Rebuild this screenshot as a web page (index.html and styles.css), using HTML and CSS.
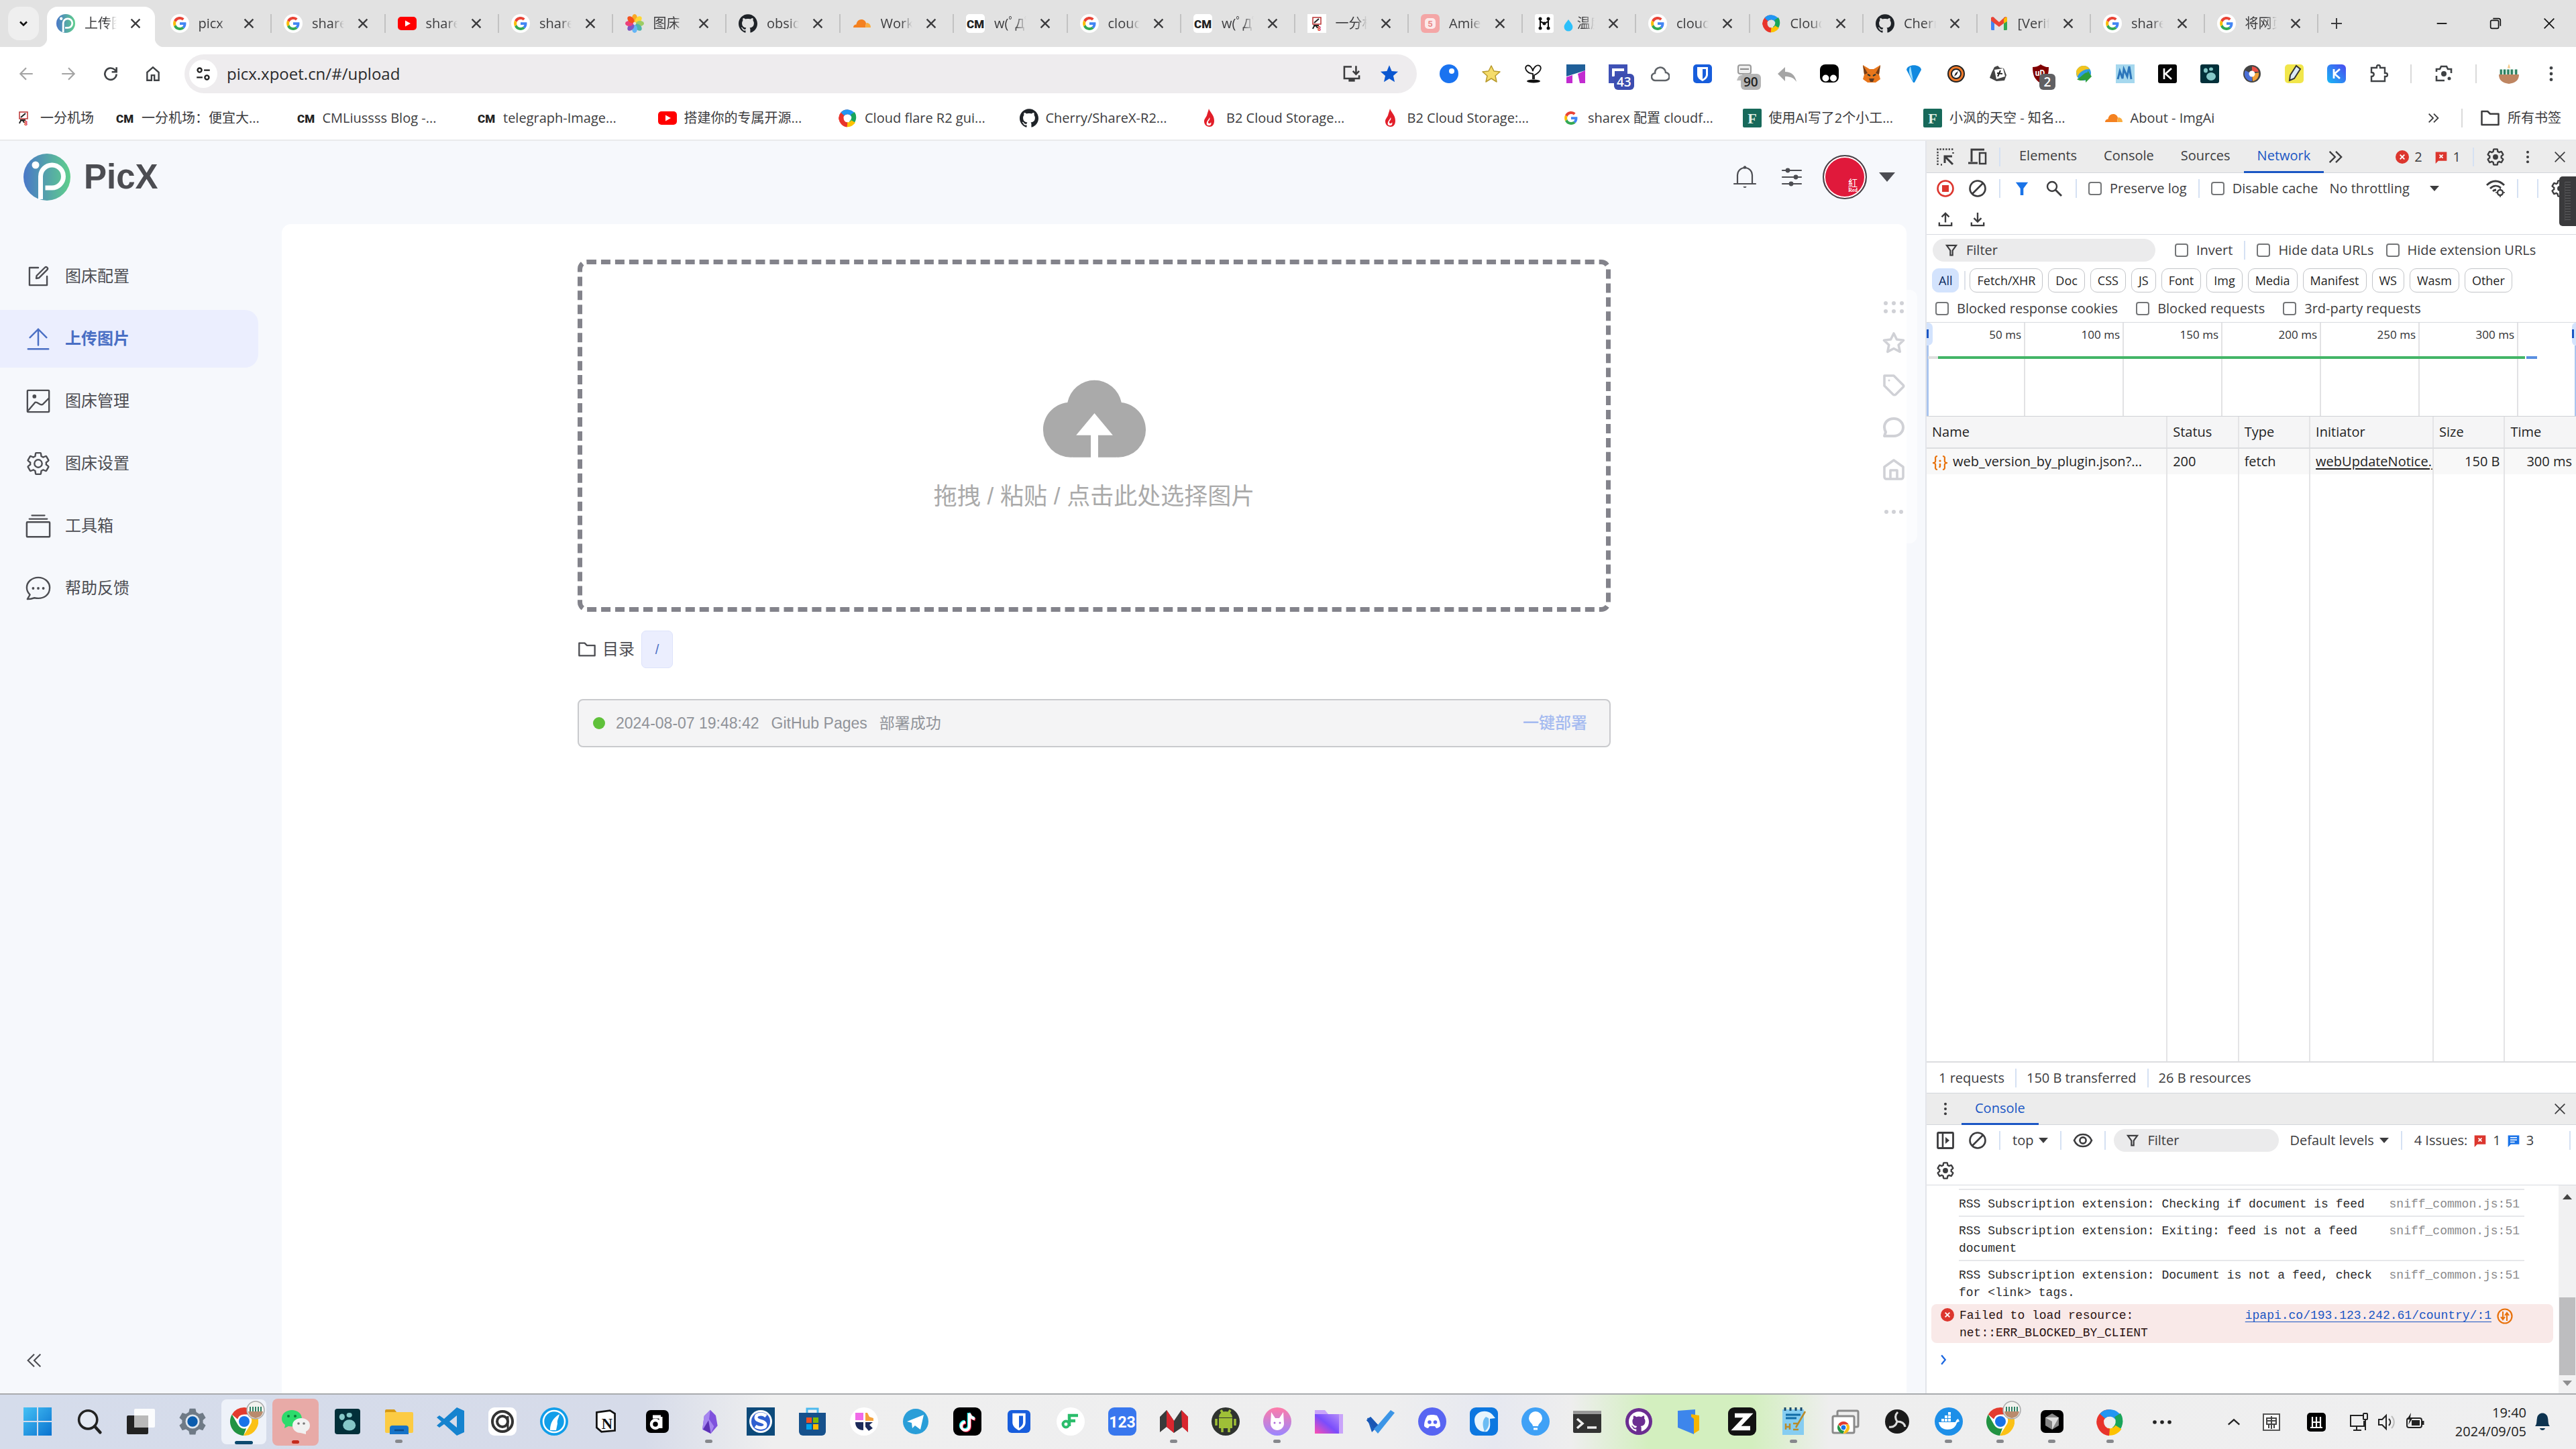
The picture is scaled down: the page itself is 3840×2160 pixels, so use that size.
FILE: index.html
```html
<!DOCTYPE html>
<html lang="zh-CN">
<head>
<meta charset="utf-8">
<title>上传图片 | PicX</title>
<link rel="stylesheet" href="styles.css">
</head>
<body>
<svg class="sprite" aria-hidden="true">
  <defs>
    <linearGradient id="gp" x1="0" y1="0" x2="1" y2="0"><stop offset="0" stop-color="#4a78c8"/><stop offset="1" stop-color="#5fcf8c"/></linearGradient>
    <linearGradient id="gwin" x1="0" y1="0" x2="1" y2="1"><stop offset="0" stop-color="#45c1f5"/><stop offset="1" stop-color="#0a72cf"/></linearGradient>
    <linearGradient id="gcat" x1="0" y1="0" x2="0" y2="1"><stop offset="0" stop-color="#ff7ba8"/><stop offset="1" stop-color="#9a86ff"/></linearGradient>
    <linearGradient id="gfold" x1="0" y1="1" x2="1" y2="0"><stop offset="0" stop-color="#ff4fb0"/><stop offset=".5" stop-color="#7a4dfc"/><stop offset="1" stop-color="#b38cf8"/></linearGradient>
    <linearGradient id="gk" x1="0" y1="1" x2="1" y2="0"><stop offset="0" stop-color="#18b8f5"/><stop offset="1" stop-color="#4b49f0"/></linearGradient>
  </defs>
  <symbol id="close" viewBox="0 0 24 24"><path d="M6.500 6.500l11 11M17.500 6.500l-11 11" stroke="currentColor" stroke-width="2" fill="none"/></symbol>
  <symbol id="down" viewBox="0 0 24 24"><path d="M6 9l6 6 6-6" stroke="currentColor" stroke-width="3" fill="none"/></symbol>
  <symbol id="plus" viewBox="0 0 24 24"><path d="M12 4v16M4 12h16" stroke="currentColor" stroke-width="2"/></symbol>
  <symbol id="min" viewBox="0 0 24 24"><path d="M4 12h16" stroke="currentColor" stroke-width="2"/></symbol>
  <symbol id="restore" viewBox="0 0 24 24"><rect x="4" y="7" width="13" height="13" rx="2" fill="none" stroke="currentColor" stroke-width="1.800"/><path d="M8 4h9a3 3 0 0 1 3 3v9" fill="none" stroke="currentColor" stroke-width="1.800"/></symbol>
  <symbol id="wclose" viewBox="0 0 24 24"><path d="M4 4l16 16M20 4L4 20" stroke="currentColor" stroke-width="1.800"/></symbol>
  <symbol id="back" viewBox="0 0 24 24"><path d="M21 12H4M12 4l-8 8 8 8" fill="none" stroke="currentColor" stroke-width="2"/></symbol>
  <symbol id="fwd" viewBox="0 0 24 24"><path d="M3 12h17M12 4l8 8-8 8" fill="none" stroke="currentColor" stroke-width="2"/></symbol>
  <symbol id="reload" viewBox="0 0 24 24"><path d="M20 12.500a8 8 0 1 1-2.500-6.200L20 9M20 3v6.500h-6.500" fill="none" stroke="currentColor" stroke-width="2.400"/></symbol>
  <symbol id="home" viewBox="0 0 24 24"><path d="M4 21V10l8-7 8 7v11h-6v-7h-4v7z" fill="none" stroke="currentColor" stroke-width="2.200"/></symbol>
  <symbol id="tune" viewBox="0 0 24 24"><g fill="none" stroke="currentColor" stroke-width="2.200"><circle cx="7" cy="7" r="2.800"/><path d="M13 7h8M3 17h8"/><circle cx="17" cy="17" r="2.800"/></g></symbol>
  <symbol id="install" viewBox="0 0 24 24"><path d="M12 3H2.500v15h19v-4M17.500 2v10M13.500 8.500l4 4 4-4" fill="none" stroke="currentColor" stroke-width="2.200"/><path d="M8 18h8v4H8z" fill="currentColor"/></symbol>
  <symbol id="starf" viewBox="0 0 24 24"><path d="M12 1l3.100 7.500 8.100.7-6.100 5.300 1.800 8L12 18.300 5.100 22.500l1.800-8L.8 9.200l8.100-.7z" fill="currentColor"/></symbol>
  <symbol id="dots" viewBox="0 0 24 24"><g fill="currentColor"><circle cx="12" cy="4" r="2.200"/><circle cx="12" cy="12" r="2.200"/><circle cx="12" cy="20" r="2.200"/></g></symbol>
  <symbol id="raquo" viewBox="0 0 24 24"><path d="M4 5l7 7-7 7M12 5l7 7-7 7" fill="none" stroke="currentColor" stroke-width="2"/></symbol>
  <symbol id="laquo" viewBox="0 0 24 24"><path d="M12 4l-8 8 8 8M20 4l-8 8 8 8" fill="none" stroke="currentColor" stroke-width="1.800"/></symbol>
  <symbol id="folder" viewBox="0 0 24 24"><path d="M2 20V4h7l3 3h10v13z" fill="none" stroke="currentColor" stroke-width="2" stroke-linejoin="round"/></symbol>

  <symbol id="picx" viewBox="0 0 70 70"><circle cx="35" cy="35" r="35" fill="url(#gp)"/><circle cx="18" cy="17" r="5.500" fill="#fff"/><path d="M25.500 68V34a17 17 0 1 1 17 17h-10" fill="none" stroke="#fff" stroke-width="7"/></symbol>
  <symbol id="g" viewBox="-10 -10 68 68"><circle cx="24" cy="24" r="34" fill="#fff"/><path fill="#EA4335" d="M24 9.500c3.540 0 6.710 1.220 9.210 3.600l6.850-6.850C35.900 2.380 30.470 0 24 0 14.620 0 6.510 5.380 2.560 13.220l7.980 6.190C12.430 13.720 17.740 9.500 24 9.500z"/><path fill="#4285F4" d="M46.980 24.550c0-1.570-.15-3.090-.38-4.550H24v9.020h12.940c-.58 2.960-2.260 5.480-4.780 7.180l7.730 6c4.510-4.180 7.090-10.360 7.090-17.650z"/><path fill="#FBBC05" d="M10.530 28.590c-.48-1.450-.76-2.990-.76-4.590s.27-3.140.76-4.590l-7.980-6.190C.92 16.460 0 20.120 0 24c0 3.880.92 7.540 2.560 10.780l7.970-6.190z"/><path fill="#34A853" d="M24 48c6.480 0 11.930-2.130 15.890-5.810l-7.730-6c-2.150 1.450-4.920 2.300-8.160 2.300-6.260 0-11.570-4.220-13.470-9.910l-7.980 6.190C6.510 42.620 14.620 48 24 48z"/></symbol>
  <symbol id="yt" viewBox="0 0 28 28"><rect y="4" width="28" height="20" rx="5" fill="#f00"/><path d="M11 9.500l8 4.500-8 4.500z" fill="#fff"/></symbol>
  <symbol id="photos" viewBox="0 0 28 28"><g stroke-width="0"><ellipse cx="14" cy="6" rx="4" ry="6" fill="#f9a825"/><ellipse cx="14" cy="6" rx="4" ry="6" fill="#fdd835" transform="rotate(45 14 14)"/><ellipse cx="14" cy="6" rx="4" ry="6" fill="#9ccc65" transform="rotate(90 14 14)"/><ellipse cx="14" cy="6" rx="4" ry="6" fill="#4db6ac" transform="rotate(135 14 14)"/><ellipse cx="14" cy="6" rx="4" ry="6" fill="#64b5f6" transform="rotate(180 14 14)"/><ellipse cx="14" cy="6" rx="4" ry="6" fill="#7e57c2" transform="rotate(225 14 14)"/><ellipse cx="14" cy="6" rx="4" ry="6" fill="#ec407a" transform="rotate(270 14 14)"/><ellipse cx="14" cy="6" rx="4" ry="6" fill="#f4511e" transform="rotate(315 14 14)"/></g></symbol>
  <symbol id="gh" viewBox="0 0 24 24"><path fill="currentColor" d="M12 .297c-6.630 0-12 5.373-12 12 0 5.303 3.438 9.800 8.205 11.385.6.113.82-.258.82-.577 0-.285-.01-1.040-.015-2.040-3.338.724-4.042-1.610-4.042-1.610C4.422 18.070 3.633 17.700 3.633 17.700c-1.087-.744.084-.729.084-.729 1.205.084 1.838 1.236 1.838 1.236 1.070 1.835 2.809 1.305 3.495.998.108-.776.417-1.305.76-1.605-2.665-.3-5.466-1.332-5.466-5.930 0-1.310.465-2.380 1.235-3.220-.135-.303-.54-1.523.105-3.176 0 0 1.005-.322 3.300 1.230.96-.267 1.980-.399 3-.405 1.020.006 2.040.138 3 .405 2.280-1.552 3.285-1.230 3.285-1.230.645 1.653.24 2.873.12 3.176.765.84 1.230 1.910 1.230 3.220 0 4.610-2.805 5.625-5.475 5.920.42.36.81 1.096.81 2.220 0 1.606-.015 2.896-.015 3.286 0 .315.21.69.825.57C20.565 22.092 24 17.592 24 12.297c0-6.627-5.373-12-12-12"/></symbol>
  <symbol id="cf" viewBox="0 0 28 28"><path d="M1 20c0-3 2-4.500 4.500-4.500C6 11 9 8 13 8c4 0 6.500 2.500 7 5.500l-1 6.500z" fill="#f48120"/><path d="M20.500 13c3.500 0 6.500 2.500 6.500 7h-8z" fill="#faad3f"/></symbol>
  <symbol id="cm" viewBox="0 0 28 28"><rect width="28" height="28" rx="5" fill="#fff"/><text x="14" y="21" text-anchor="middle" font-family="Roboto, sans-serif" font-size="17" font-weight="900" fill="#222">CM</text></symbol>
  <symbol id="yf" viewBox="0 0 28 28"><rect width="28" height="28" fill="#fff"/><rect x="8" y="5" width="12" height="10" fill="#fff" stroke="#b33" stroke-width="1.500"/><path d="M10 13l7-6M8 22c2-6 5-6 7-1M9 17h8" stroke="#222" stroke-width="2" fill="none"/><text x="15" y="25" font-size="9" font-family="Roboto, sans-serif" font-weight="700" fill="#d33">8</text></symbol>
  <symbol id="amie" viewBox="0 0 28 28"><rect width="28" height="28" rx="6" fill="#f4a6a6"/><rect x="6" y="6" width="16" height="16" rx="5" fill="#fdeaea"/><text x="14" y="19" text-anchor="middle" font-size="13" font-family="Roboto, sans-serif" font-weight="700" fill="#e98b8b">5</text></symbol>
  <symbol id="hh" viewBox="0 0 28 28"><rect width="28" height="28" rx="3" fill="#fff"/><path d="M8 7v14M20 7v14M8 11l6 3 6-3" stroke="#111" stroke-width="2" fill="none"/><g fill="#111"><circle cx="8" cy="7" r="2.500"/><circle cx="8" cy="21" r="2.500"/><circle cx="20" cy="7" r="2.500"/><circle cx="20" cy="21" r="2.500"/><circle cx="14" cy="14" r="2.500"/></g></symbol>
  <symbol id="drop" viewBox="0 0 20 28"><path d="M10 4c4 6 8 9 8 14a8 8 0 0 1-16 0c0-5 4-8 8-14z" fill="#2cc0fb"/></symbol>
  <symbol id="sx" viewBox="0 0 28 28"><g fill="none" stroke-width="7"><path d="M4 16A9 9 0 0 1 14 5" stroke="#e8342c"/><path d="M6 8a10 10 0 0 1 16 2" stroke="#2196f3"/><path d="M21 7a11 11 0 0 1-3 15" stroke="#19a55a"/><path d="M22 19a10 10 0 0 1-12 4" stroke="#fdc200"/><path d="M13 24A10 10 0 0 1 4 13" stroke="#e8342c"/></g></symbol>
  <symbol id="gmail" viewBox="0 0 28 28"><path d="M2 5h5v19H3.500A1.500 1.500 0 0 1 2 22.500z" fill="#4285f4"/><path d="M21 5h5v17.500a1.500 1.500 0 0 1-1.500 1.500H21z" fill="#34a853"/><path d="M2 5l3-1 9 8 9-8 3 1v5l-12 9L2 10z" fill="#ea4335"/><path d="M21 7l4-3 1 2v5l-5 3z" fill="#fbbc04"/></symbol>
  <symbol id="flame" viewBox="0 0 28 28"><path d="M13 0c2 6 8 9 8 18 0 6-3 9-7 9s-8-3-8-8c0-4 3-6 4-9 1-4 2-6 3-10z" fill="#e21e29"/><path d="M14 13c2 4-3 5-2 8 1 2 4 1 4-1 1 3 0 5-3 5s-4-2-3-5c1-3 3-4 4-7z" fill="#fff"/></symbol>
  <symbol id="ff" viewBox="0 0 28 28"><rect width="28" height="28" rx="2" fill="#17695a"/><text x="14" y="22" text-anchor="middle" font-size="22" font-family="Liberation Serif, serif" font-weight="700" fill="#e6f3e9">F</text></symbol>

  <symbol id="e1" viewBox="0 0 28 28"><circle cx="14" cy="14" r="14" fill="#1a73f0"/><circle cx="18" cy="10" r="4" fill="#fff"/></symbol>
  <symbol id="e2" viewBox="0 0 28 28"><path d="M14 2l4 8 9 1-7 6 2 9-8-5-8 5 2-9-7-6 9-1z" fill="#f5dc6b" stroke="#b89a2c" stroke-width="1.500" stroke-linejoin="round"/></symbol>
  <symbol id="e3" viewBox="0 0 28 28"><path d="M13 22V14C3 13 0 5 4 2c4-2 8 3 9 8 1-6 6-10 10-8 4 3 1 10-8 14v6" fill="none" stroke="#111" stroke-width="1.800"/><ellipse cx="14" cy="25" rx="10" ry="2.500" fill="#111"/></symbol>
  <symbol id="e4" viewBox="0 0 28 28"><path d="M0 0h28v9L0 18z" fill="#1f5f99"/><path d="M0 19l9-3v12H0zM17 14l11-5v19h-8z" fill="#c22bd0"/></symbol>
  <symbol id="e5" viewBox="0 0 28 28"><rect width="28" height="28" fill="#3f51b5"/><path d="M5 6h18v12H5z" fill="#fff"/><path d="M9 10h16v8H9z" fill="#3f51b5"/></symbol>
  <symbol id="cloudo" viewBox="0 0 28 28"><path d="M7 24a5.500 5.500 0 0 1-1-11 8 8 0 0 1 16-1 6 6 0 0 1-1 12z" fill="none" stroke="#5f6368" stroke-width="2.600"/></symbol>
  <symbol id="bw" viewBox="0 0 28 28"><rect width="28" height="28" rx="5" fill="#175ddc"/><path d="M6 4h16v11c0 5-4 8-8 10-4-2-8-5-8-10z" fill="#fff"/><path d="M14 7h5v8c0 3-2 5-5 7z" fill="#175ddc"/></symbol>
  <symbol id="e8" viewBox="0 0 28 28"><rect x="4" y="1" width="19" height="13" rx="3" fill="#eee" stroke="#999" stroke-width="2"/><path d="M2 24c2-6 4-8 7-8h9c4 0 6 3 7 8z" fill="#bbb"/><path d="M7 7h13" stroke="#888" stroke-width="2"/></symbol>
  <symbol id="e9" viewBox="0 0 28 28"><path d="M11 4v7c9 0 15 5 17 15-4-6-9-8-17-8v7L0 14z" fill="#a5a5a5"/></symbol>
  <symbol id="e10" viewBox="0 0 28 28"><rect width="28" height="27" rx="8" fill="#000"/><circle cx="8.500" cy="20.500" r="5" fill="#fff"/><circle cx="20" cy="20.500" r="5" fill="#fff"/></symbol>
  <symbol id="e11" viewBox="0 0 28 28"><path d="M1 1l10 6h6l10-6-2 14 2 7-7 5h-12l-7-5 2-7z" fill="#e8761b"/><path d="M1 1l7 12-5 2zM27 1l-7 12 5 2z" fill="#763d16"/><path d="M10 21h8l-2 5h-4z" fill="#5b3a26"/><path d="M8 15l4 2M20 15l-4 2" stroke="#233" stroke-width="2"/></symbol>
  <symbol id="e12" viewBox="0 0 28 28"><path d="M3 8C4-1 24-1 25 8L15 27h-2z" fill="#1089e0"/><path d="M9 3c-4 5-2 13 4 22z" fill="#9fe0ff"/></symbol>
  <symbol id="e13" viewBox="0 0 28 28"><circle cx="14" cy="14" r="12" fill="#f27b2a" stroke="#222" stroke-width="2"/><circle cx="14" cy="14" r="7" fill="#fff" stroke="#222" stroke-width="2"/><path d="M17 10l-2 5-4 3 2-5z" fill="#222"/></symbol>
  <symbol id="e14" viewBox="0 0 28 28"><path d="M8 4l5-2 3 3 6 1 4 10-3 8-12 1-10-5 3-8z" fill="#444"/><path d="M8 8l13-2 3 12-13 4z" fill="#fff"/><path d="M13 18l4-9M12 13l8 1" stroke="#222" stroke-width="2"/></symbol>
  <symbol id="ub" viewBox="0 0 28 28"><path d="M14 0c4 3 8 4 12 4 0 12-3 19-12 24C5 23 2 16 2 4c4 0 8-1 12-4z" fill="#800000"/><text x="13" y="17" text-anchor="middle" font-size="12" font-family="Roboto, sans-serif" font-weight="700" fill="#fff">uD</text></symbol>
  <symbol id="e16" viewBox="0 0 28 28"><circle cx="15" cy="13" r="11" fill="#2f9be0"/><path d="M4 10c4-10 16-10 20-3-8 0-14 3-19 12z" fill="#f2c41d"/><path d="M5 22c6-2 10-10 16-10v-3l6 9-9 9v-4c-5 1-9 2-13-1z" fill="#2f9e3a"/></symbol>
  <symbol id="e17" viewBox="0 0 28 28"><rect width="28" height="28" fill="#a6d8ee"/><path d="M3 22l3-12 4 11 2-14 5 11 3-15 3 19" fill="none" stroke="#2c76bb" stroke-width="3"/></symbol>
  <symbol id="e18" viewBox="0 0 28 28"><rect width="28" height="28" rx="3" fill="#050505"/><path d="M9 6v16M20 6l-9 8 9 8" fill="none" stroke="#fff" stroke-width="2.600"/></symbol>
  <symbol id="logseq" viewBox="0 0 28 28"><rect width="28" height="28" rx="3" fill="#02303a"/><g fill="#85c8c8"><ellipse cx="8" cy="9" rx="3" ry="3.500"/><ellipse cx="16" cy="7" rx="3" ry="2.500"/><ellipse cx="16" cy="18" rx="7" ry="6"/></g></symbol>
  <symbol id="e20" viewBox="0 0 28 28"><circle cx="14" cy="14" r="13" fill="#444"/><path d="M14 3a11 11 0 0 1 10 8H14z" fill="#eb4f45"/><path d="M24 12a11 11 0 0 1-9 13l-1-11z" fill="#f0a13a"/><path d="M14 25A11 11 0 0 1 4 9l10 5z" fill="#4a6fd8"/><circle cx="14" cy="14" r="4.500" fill="#fff"/></symbol>
  <symbol id="e21" viewBox="0 0 28 28"><rect width="28" height="28" rx="5" fill="#f1e64b"/><path d="M8 16l9-14 6 5-9 14-7 3z" fill="#dbeaf5" stroke="#333" stroke-width="2"/></symbol>
  <symbol id="e22" viewBox="0 0 28 28"><rect width="28" height="28" rx="6" fill="url(#gk)"/><path d="M10 7v14M19 7l-8 7 8 7" fill="none" stroke="#fff" stroke-width="2.800"/></symbol>
  <symbol id="puzzle" viewBox="0 0 28 28"><path d="M3 5h8V3.500a2.500 2.500 0 0 1 5 0V5h7v8h1.500a2.500 2.500 0 0 1 0 5H23v7H3v-7c5 0 5-6 0-6z" fill="none" stroke="currentColor" stroke-width="2.400"/></symbol>
  <symbol id="lens" viewBox="0 0 28 28"><path d="M3 11V7h5l2-4h8l2 4h5v6M3 17v7h12" fill="none" stroke="currentColor" stroke-width="2.600"/><circle cx="14" cy="14" r="4" fill="currentColor"/><circle cx="22" cy="21" r="2.500" fill="currentColor"/></symbol>
  <symbol id="plant" viewBox="0 0 28 28"><path d="M14 0l2 6h-4z" fill="#f3c98a"/><path d="M2 8h24v6H2z" fill="#d9efe2"/><path d="M3 8v7M8 8v7M13 8v7M18 8v7M24 8v7" stroke="#2c8062" stroke-width="3"/><path d="M0 15h28c0 8-5 12-14 13C5 27 0 23 0 15z" fill="#be8561"/></symbol>

  <symbol id="edit" viewBox="0 0 1024 1024"><path fill="currentColor" d="M832 512a32 32 0 1 1 64 0v352a32 32 0 0 1-32 32H160a32 32 0 0 1-32-32V160a32 32 0 0 1 32-32h352a32 32 0 0 1 0 64H192v640h640V512z"/><path fill="currentColor" d="m469.952 554.240 52.800-7.552L847.104 222.400a32 32 0 1 0-45.248-45.248L477.440 501.440l-7.552 52.800zm422.400-422.400a96 96 0 0 1 0 135.808l-331.840 331.840a32 32 0 0 1-18.112 9.088L436.800 623.680a32 32 0 0 1-36.224-36.224l15.104-105.600a32 32 0 0 1 9.024-18.112l331.904-331.840a96 96 0 0 1 135.744 0z"/></symbol>
  <symbol id="upl" viewBox="0 0 40 40"><path d="M4 36h32M20 30V6M7 18L20 5l13 13" fill="none" stroke="currentColor" stroke-width="2.600" stroke-linecap="round"/></symbol>
  <symbol id="pic" viewBox="0 0 40 40"><rect x="3" y="3" width="34" height="34" rx="1" fill="none" stroke="currentColor" stroke-width="2.500"/><circle cx="14" cy="12.500" r="3" fill="currentColor"/><path d="M4 35l11-13c4-2 8 6 12 3l10-10" fill="none" stroke="currentColor" stroke-width="2.500"/></symbol>
  <symbol id="gear" viewBox="0 0 24 24"><path d="M19.430 12.980c.04-.32.07-.64.07-.98 0-.34-.03-.66-.07-.98l2.110-1.650c.19-.15.24-.42.12-.64l-2-3.460c-.09-.16-.26-.25-.44-.25-.06 0-.12.01-.17.03l-2.490 1c-.52-.4-1.080-.73-1.690-.98l-.38-2.650C14.460 2.180 14.250 2 14 2h-4c-.25 0-.46.18-.49.42l-.38 2.650c-.61.25-1.170.59-1.690.98l-2.490-1c-.06-.02-.12-.03-.18-.03-.17 0-.34.09-.43.25l-2 3.460c-.13.22-.07.49.12.64l2.110 1.650c-.04.32-.07.65-.07.98 0 .33.03.66.07.98l-2.110 1.650c-.19.15-.24.42-.12.64l2 3.460c.09.16.26.25.44.25.06 0 .12-.01.17-.03l2.490-1c.52.4 1.080.73 1.690.98l.38 2.650c.03.24.24.42.49.42h4c.25 0 .46-.18.49-.42l.38-2.650c.61-.25 1.170-.59 1.690-.98l2.490 1c.06.02.12.03.18.03.17 0 .34-.09.43-.25l2-3.460c.12-.22.07-.49-.12-.64z" fill="none" stroke="currentColor" stroke-width="1.500"/><circle cx="12" cy="12" r="3.600" fill="none" stroke="currentColor" stroke-width="1.500"/></symbol>
  <symbol id="gear2" viewBox="0 0 24 24"><path d="M19.430 12.980c.04-.32.07-.64.07-.98 0-.34-.03-.66-.07-.98l2.110-1.650c.19-.15.24-.42.12-.64l-2-3.460c-.09-.16-.26-.25-.44-.25l-2.660 1.030c-.52-.4-1.080-.73-1.690-.98l-.38-2.650C14.460 2.180 14.250 2 14 2h-4c-.25 0-.46.18-.49.42l-.38 2.650c-.61.25-1.170.59-1.690.98l-2.670-1.030c-.17 0-.34.09-.43.25l-2 3.460c-.13.22-.07.49.12.64l2.110 1.650c-.04.32-.07.65-.07.98 0 .33.03.66.07.98l-2.110 1.650c-.19.15-.24.42-.12.64l2 3.460c.09.16.26.25.44.25l2.660-1.030c.52.4 1.080.73 1.690.98l.38 2.650c.03.24.24.42.49.42h4c.25 0 .46-.18.49-.42l.38-2.650c.61-.25 1.170-.59 1.690-.98l2.670 1.030c.17 0 .34-.09.43-.25l2-3.460c.12-.22.07-.49-.12-.64z" fill="none" stroke="currentColor" stroke-width="2"/><circle cx="12" cy="12" r="3.400" fill="currentColor"/></symbol>
  <symbol id="box" viewBox="0 0 40 40"><rect x="2" y="14" width="36" height="23" rx="1" fill="none" stroke="currentColor" stroke-width="2.600"/><path d="M6 9h28M10 3.500h20" stroke="currentColor" stroke-width="2.400" stroke-linecap="round"/></symbol>
  <symbol id="chat" viewBox="0 0 40 40"><path d="M20 3C10 3 2 10 2 19c0 5 2 8 5 11l-4 7c4 0 8-1 11-2 15 3 24-5 24-16C38 10 30 3 20 3z" fill="none" stroke="currentColor" stroke-width="2.500" stroke-linejoin="round"/><g fill="currentColor"><circle cx="12" cy="20" r="2"/><circle cx="20" cy="20" r="2"/><circle cx="28" cy="20" r="2"/></g></symbol>
  <symbol id="bell" viewBox="0 0 36 36"><path d="M2 28h32M7 28V15a11 11 0 0 1 22 0v13" fill="none" stroke="currentColor" stroke-width="2.200" stroke-linecap="round"/><circle cx="18" cy="3.500" r="2.200" fill="currentColor"/><path d="M15.500 32h5a2.500 2 0 0 1-5 0z" fill="currentColor"/></symbol>
  <symbol id="sliders" viewBox="0 0 32 32"><path d="M2 6h28M2 16h28M2 26h28" stroke="currentColor" stroke-width="2.200" stroke-linecap="round"/><g fill="currentColor"><circle cx="10" cy="6" r="3.400"/><circle cx="22" cy="16" r="3.400"/><circle cx="15" cy="26" r="3.400"/></g></symbol>
  <symbol id="caret" viewBox="0 0 24 14"><path d="M0 0h24L12 14z" fill="currentColor"/></symbol>
  <symbol id="cloudup" viewBox="0 0 1024 1024"><path fill="currentColor" d="M544 864V672h128L512 480 352 672h128v192H320v-1.600c-5.376.32-10.496 1.600-16 1.600A240 240 0 0 1 64 624c0-123.136 93.120-223.488 212.608-237.248A239.808 239.808 0 0 1 512 192a239.872 239.872 0 0 1 235.456 194.752c119.488 13.760 212.480 114.112 212.480 237.248a240 240 0 0 1-240 240c-5.376 0-10.560-1.280-16-1.600v1.600H544z"/></symbol>
  <symbol id="w1" viewBox="0 0 34 34"><g fill="currentColor"><circle cx="5" cy="11" r="3"/><circle cx="17" cy="11" r="3"/><circle cx="29" cy="11" r="3"/><circle cx="5" cy="23" r="3"/><circle cx="17" cy="23" r="3"/><circle cx="29" cy="23" r="3"/></g></symbol>
  <symbol id="w2" viewBox="0 0 34 34"><path d="M17 3l4.500 9 10 1.300-7.300 7 2 10L17 25.500l-9.200 4.800 2-10-7.300-7 10-1.300z" fill="none" stroke="currentColor" stroke-width="3.600" stroke-linejoin="round"/></symbol>
  <symbol id="w3" viewBox="0 0 34 34"><path d="M3 3h14l14 14c1 1 1 2 0 3L20 31c-1 1-3 1-4 0L3 18z" fill="none" stroke="currentColor" stroke-width="3.600" stroke-linejoin="round"/><circle cx="10" cy="10" r="1.500" fill="currentColor"/></symbol>
  <symbol id="w4" viewBox="0 0 34 34"><path d="M17 4C9 4 3 9 3 17c0 3 1 5 2 7l-2 6h14c8 0 14-6 14-13S25 4 17 4z" fill="none" stroke="currentColor" stroke-width="4" stroke-linejoin="round"/></symbol>
  <symbol id="w5" viewBox="0 0 34 34"><path d="M3 13L17 3l14 10v15a3 3 0 0 1-3 3H6a3 3 0 0 1-3-3zM12 30V18h10v12" fill="none" stroke="currentColor" stroke-width="3.600" stroke-linejoin="round"/></symbol>
  <symbol id="w6" viewBox="0 0 34 34"><g fill="currentColor"><circle cx="6" cy="17" r="3"/><circle cx="17" cy="17" r="3"/><circle cx="28" cy="17" r="3"/></g></symbol>

  <symbol id="inspect" viewBox="0 0 26 26"><path d="M1.500 25V1.500H25" fill="none" stroke="currentColor" stroke-width="2.400" stroke-dasharray="2.400 2"/><path d="M24.500 6v4M6 24.500h4" stroke="currentColor" stroke-width="2.400" stroke-dasharray="2"/><path d="M12 22V12h11M12 12l12 12" fill="none" stroke="currentColor" stroke-width="3"/></symbol>
  <symbol id="device" viewBox="0 0 28 26"><path d="M24 2H5v18M0 22h14" fill="none" stroke="currentColor" stroke-width="3"/><rect x="17" y="7" width="9" height="16" fill="none" stroke="currentColor" stroke-width="2.500"/></symbol>
  <symbol id="err" viewBox="0 0 24 24"><circle cx="12" cy="12" r="12" fill="#dc362e"/><path d="M8 8l8 8M16 8l-8 8" stroke="#fff" stroke-width="2.200"/></symbol>
  <symbol id="iss" viewBox="0 0 24 24"><path d="M2 3h20v16H7l-5 5z" fill="#dc362e"/><path d="M9 8l6 6M15 8l-6 6" stroke="#fff" stroke-width="2"/></symbol>
  <symbol id="msg" viewBox="0 0 24 24"><path d="M2 3h20v16H7l-5 5z" fill="#1a73e8"/><path d="M6 7h12M6 11h12M6 15h8" stroke="#fff" stroke-width="1.800"/></symbol>
  <symbol id="rec" viewBox="0 0 26 26"><circle cx="13" cy="13" r="11.500" fill="none" stroke="#dc362e" stroke-width="2.600"/><rect x="8" y="8" width="10" height="10" fill="#dc362e"/></symbol>
  <symbol id="clear" viewBox="0 0 26 26"><circle cx="13" cy="13" r="11.500" fill="none" stroke="currentColor" stroke-width="2.600"/><path d="M5 21L21 5" stroke="currentColor" stroke-width="2.600"/></symbol>
  <symbol id="funnelf" viewBox="0 0 24 24"><path d="M2 2h20l-7.500 10v11h-5V12z" fill="currentColor"/></symbol>
  <symbol id="funnel" viewBox="0 0 24 24"><path d="M3.500 3.500h17L14 12.500V21h-4v-8.500z" fill="none" stroke="currentColor" stroke-width="2.600"/></symbol>
  <symbol id="search" viewBox="0 0 24 24"><circle cx="9" cy="9" r="7" fill="none" stroke="currentColor" stroke-width="2.400"/><path d="M14 14l9 9" stroke="currentColor" stroke-width="2.800"/></symbol>
  <symbol id="wifi" viewBox="0 0 28 26"><path d="M1 8C9 0 19 0 27 8M6 13c5-5 11-5 16-1M10 17c2-2 4-2 5-2" fill="none" stroke="currentColor" stroke-width="2.800"/><circle cx="21" cy="19" r="4" fill="none" stroke="currentColor" stroke-width="2.400"/><path d="M21 12v14M14 19h14" stroke="currentColor" stroke-width="1.600" stroke-dasharray="3 8"/></symbol>
  <symbol id="up" viewBox="0 0 24 24"><path d="M2 17v5h20v-5M12 17V2M6 8l6-6 6 6" fill="none" stroke="currentColor" stroke-width="2.600"/></symbol>
  <symbol id="dl" viewBox="0 0 24 24"><path d="M2 17v5h20v-5M12 1v15M6 10l6 6 6-6" fill="none" stroke="currentColor" stroke-width="2.600"/></symbol>
  <symbol id="json" viewBox="0 0 24 24"><path d="M8 2C3 2 6 8 5 10c0 1-2 2-4 2 2 0 4 1 4 2 1 2-2 8 3 8M16 2c5 0 2 6 3 8 0 1 2 2 4 2-2 0-4 1-4 2-1 2 2 8-3 8" fill="none" stroke="#e8710a" stroke-width="2.200"/><circle cx="12" cy="9" r="1.600" fill="#e8710a"/><path d="M12 13v4l-1 2" stroke="#e8710a" stroke-width="2.400"/></symbol>
  <symbol id="side" viewBox="0 0 26 26"><rect x="1.500" y="1.500" width="23" height="23" rx="1" fill="none" stroke="currentColor" stroke-width="2.800"/><path d="M9 2v22" stroke="currentColor" stroke-width="2.600"/><path d="M13 8l6 5-6 5z" fill="currentColor"/></symbol>
  <symbol id="eye" viewBox="0 0 30 22"><path d="M2 11C7-1 23-1 28 11 23 23 7 23 2 11z" fill="none" stroke="currentColor" stroke-width="2.600"/><circle cx="15" cy="11" r="4.600" fill="none" stroke="currentColor" stroke-width="2.600"/></symbol>
  <symbol id="swap" viewBox="0 0 24 24"><circle cx="12" cy="12" r="10.500" fill="none" stroke="#e8710a" stroke-width="2.200"/><path d="M9 5v12M6 13l3 4 3-4M15 19V7M12 11l3-4 3 4" fill="none" stroke="#e8710a" stroke-width="2"/></symbol>

  <symbol id="win" viewBox="0 0 42 42"><path d="M0 0h20v20H0zM22 0h20v20H22zM0 22h20v20H0zM22 22h20v20H22z" fill="url(#gwin)"/></symbol>
  <symbol id="find" viewBox="0 0 42 42"><circle cx="19" cy="18" r="15" fill="#e4e9f3" stroke="#222" stroke-width="4"/><path d="M30 29l9 10" stroke="#222" stroke-width="5" stroke-linecap="round"/></symbol>
  <symbol id="task" viewBox="0 0 42 42"><rect x="0" y="12" width="32" height="28" rx="2" fill="#222"/><rect x="11" y="2" width="31" height="28" rx="2" fill="#fff" opacity=".9"/><rect x="11" y="12" width="21" height="18" fill="#b9b9b9"/></symbol>
  <symbol id="setg" viewBox="0 0 24 24"><path d="M9.500 1h5l.7 3 2.500 1.500 3-1 2.500 4.300-2.300 2v2.500l2.300 2-2.500 4.300-3-1-2.500 1.500-.7 3h-5l-.7-3-2.500-1.500-3 1L.8 15.300l2.300-2v-2.500l-2.300-2L3.300 4.500l3 1L8.800 4z" fill="#6f7a86"/><circle cx="12" cy="12" r="6" fill="#dfe6ee"/><circle cx="12" cy="12" r="4.400" fill="#0b5cad"/></symbol>
  <symbol id="chrome" viewBox="0 0 42 42"><circle cx="21" cy="21" r="21" fill="#fff"/><path d="M21 0a21 21 0 0 1 18.200 10.500H21a10.500 10.500 0 0 0-10 7L2.800 10.500A21 21 0 0 1 21 0z" fill="#e33b2e"/><path d="M39.200 10.500A21 21 0 0 1 20 42l10-16a10.500 10.500 0 0 0-3-15.500z" fill="#fbc116"/><path d="M2.800 10.500L12 26.500a10.500 10.500 0 0 0 12 4.800L20 42A21 21 0 0 1 2.800 10.500z" fill="#229342"/><circle cx="21" cy="21" r="10" fill="#fff"/><circle cx="21" cy="21" r="8" fill="#1a73e8"/></symbol>
  <symbol id="chromep" viewBox="0 0 56 52"><use href="#chrome" x="4" y="10" width="42" height="42"/><circle cx="42" cy="14" r="13" fill="#f2f2ee" stroke="#aaa" stroke-width="1.500"/><path d="M31 16h22c-1 6-5 9-11 10-6-1-10-4-11-10z" fill="#b98b6d"/><path d="M34 9v7M38 9v7M42 9v7M46 9v7M50 9v7" stroke="#2c8062" stroke-width="2"/></symbol>
  <symbol id="wechat" viewBox="0 0 42 42"><path d="M15 3C7 3 0 8 0 16c0 4 2 7 5 9l-1 5 6-3c12 2 20-3 20-11S23 3 15 3z" fill="#2ddb6c"/><circle cx="10" cy="12" r="2" fill="#0b7b39"/><circle cx="20" cy="12" r="2" fill="#0b7b39"/><path d="M29 15c-7 0-13 4-13 11 0 6 5 11 12 11l8 2v-4c4-2 6-5 6-9 0-7-6-11-13-11z" fill="#f1f1f1"/><circle cx="25" cy="23" r="1.800" fill="#777"/><circle cx="33" cy="23" r="1.800" fill="#777"/></symbol>
  <symbol id="files" viewBox="0 0 42 42"><path d="M0 5a2 2 0 0 1 2-2h12l4 5H0z" fill="#d79a16"/><rect y="7" width="42" height="31" rx="2" fill="#fccb43"/><path d="M7 40V31a4 4 0 0 1 4-4h20a4 4 0 0 1 4 4v9z" fill="#1673c8"/><path d="M14 34h14" stroke="#0b4a8a" stroke-width="2.500"/></symbol>
  <symbol id="vsc" viewBox="0 0 42 42"><path d="M30 0l11 5v32l-11 5L11 25l-7 5-4-3 7-6-7-6 4-3 7 5zM30 12L19 21l11 9z" fill="#1583cf"/></symbol>
  <symbol id="t10" viewBox="0 0 42 42"><rect width="42" height="42" rx="9" fill="#fff"/><circle cx="21" cy="21" r="15" fill="none" stroke="#333" stroke-width="4"/><circle cx="21" cy="21" r="8" fill="none" stroke="#333" stroke-width="4"/><path d="M29 13v20" stroke="#333" stroke-width="3"/></symbol>
  <symbol id="t11" viewBox="0 0 42 42"><circle cx="21" cy="21" r="21" fill="#119ee9"/><circle cx="21" cy="21" r="16" fill="none" stroke="#fff" stroke-width="2.500"/><path d="M15 34c0-10 4-18 14-24-1 6-4 9-3 14l-2 10z" fill="#fff"/></symbol>
  <symbol id="notion" viewBox="0 0 42 42"><path d="M6 6l22-3 8 5v28l-22 2-8-7z" fill="#fff" stroke="#111" stroke-width="3"/><text x="23" y="33" text-anchor="middle" font-size="25" font-weight="700" font-family="Liberation Serif, serif" fill="#111">N</text></symbol>
  <symbol id="t13" viewBox="0 0 42 42"><rect x="4" y="4" width="34" height="34" rx="7" fill="#000"/><circle cx="18" cy="25" r="6" fill="none" stroke="#fff" stroke-width="4.500"/><path d="M26 14v17M14 14h12" stroke="#fff" stroke-width="5"/></symbol>
  <symbol id="obs" viewBox="0 0 42 42"><path d="M23 2l9 9 3 17-11 13-14-7 3-22z" fill="#7f51dd"/><path d="M23 2l-2 15 8 12-5 12-14-7 3-22z" fill="#a685f0"/><path d="M20 19l-9 15 13 7z" fill="#5c31b5"/></symbol>
  <symbol id="t15" viewBox="0 0 42 42"><rect width="42" height="42" fill="#0d4a7a"/><circle cx="21" cy="21" r="17" fill="#fff"/><circle cx="21" cy="21" r="14" fill="#2f5fd0"/><path d="M29 13c-6-5-15-3-15 2 0 7 14 4 14 11 0 5-9 6-15 2" fill="none" stroke="#fff" stroke-width="5"/></symbol>
  <symbol id="store" viewBox="0 0 42 42"><path d="M13 9V2h16v7" fill="none" stroke="#4cb9ee" stroke-width="3"/><path d="M1 8h40v28a6 6 0 0 1-6 6H7a6 6 0 0 1-6-6z" fill="#16518c"/><path d="M12 15h8v8h-8z" fill="#f25022"/><path d="M22 15h8v8h-8z" fill="#7fba00"/><path d="M12 25h8v8h-8z" fill="#00a4ef"/><path d="M22 25h8v8h-8z" fill="#ffb900"/></symbol>
  <symbol id="t17" viewBox="0 0 42 42"><circle cx="21" cy="21" r="21" fill="#fff"/><path d="M8 8h12v11H8z" fill="#f06ae8"/><path d="M23 8h3l3 6 6 2v4H23z" fill="#f5a33c"/><path d="M8 22h12v12C13 34 8 30 8 22zM23 22h11l-5 4 5 5-6 4-5-6z" fill="#1c2a5a"/></symbol>
  <symbol id="tg" viewBox="0 0 42 42"><circle cx="21" cy="21" r="19" fill="#2a9ed8"/><path d="M8 21l25-10-5 22-8-6-4 4-1-8z" fill="#fff"/></symbol>
  <symbol id="tt" viewBox="0 0 42 42"><rect width="42" height="42" rx="9" fill="#000"/><path d="M23 8v19a6 6 0 1 1-6-6M23 8c1 5 4 7 8 8" fill="none" stroke="#25f4ee" stroke-width="4.500"/><path d="M25 10v19a6 6 0 1 1-6-6M25 10c1 5 4 7 8 8" fill="none" stroke="#fe2c55" stroke-width="4"/><path d="M24 9v19a6 6 0 1 1-6-6M24 9c1 5 4 7 8 8" fill="none" stroke="#fff" stroke-width="4"/></symbol>
  <symbol id="t21" viewBox="0 0 42 42"><circle cx="21" cy="21" r="21" fill="#fff"/><circle cx="14" cy="25" r="4.500" fill="none" stroke="#2bbd6b" stroke-width="4"/><path d="M19 28V12h13M19 20h9" fill="none" stroke="#2bbd6b" stroke-width="4.500"/></symbol>
  <symbol id="t22" viewBox="0 0 42 42"><rect width="42" height="42" rx="9" fill="#3877ee"/><text x="21" y="30" text-anchor="middle" font-size="23" font-family="Roboto, sans-serif" font-weight="700" fill="#fff">123</text></symbol>
  <symbol id="t23" viewBox="0 0 42 42"><path d="M0 14L10 4l11 16L32 4l10 10v23l-8-8-13 9-11-9-10 8z" fill="#3a3a3a"/><path d="M10 4l11 16v18l-11-9zM32 4l10 10v23l-9-8z" fill="#d9262e"/></symbol>
  <symbol id="t24" viewBox="0 0 42 42"><circle cx="21" cy="21" r="21" fill="#2f332f"/><path d="M11 16h20v15H11z" fill="#9fc037"/><path d="M11 15c0-12 20-12 20 0z" fill="#9fc037"/><path d="M7 17v10M35 17v10M16 30v7M26 30v7M14 4l3 5M28 4l-3 5" stroke="#9fc037" stroke-width="3.500"/></symbol>
  <symbol id="t25" viewBox="0 0 42 42"><circle cx="21" cy="21" r="21" fill="url(#gcat)"/><path d="M12 7l6 9h6l6-9 1 17c0 6-5 10-10 10s-10-4-10-10z" fill="#fff"/><circle cx="17" cy="23" r="1.500" fill="#b06ad8"/><circle cx="25" cy="23" r="1.500" fill="#b06ad8"/></symbol>
  <symbol id="t26" viewBox="0 0 42 42"><path d="M0 4h15l5 6h22v29H0z" fill="#c9a4fa"/><path d="M0 10h36v29H0z" fill="url(#gfold)"/></symbol>
  <symbol id="t27" viewBox="0 0 42 42"><path d="M1 16l7 21 10-10L7 15z" fill="#1a5dbd"/><path d="M0 19l6-5 11 12L36 4l6 4-25 31z" fill="#3c95e6"/><path d="M0 19l6-5 11 12-6 6z" fill="#1a56b4"/></symbol>
  <symbol id="dc" viewBox="0 0 42 42"><circle cx="21" cy="21" r="21" fill="#5865f2"/><path d="M14 12l5-1h4l5 1c4 6 5 11 5 16-2 2-4 3-6 3l-2-3h-8l-2 3c-2 0-4-1-6-3 0-5 1-10 5-16z" fill="#fff"/><circle cx="17" cy="22" r="2.800" fill="#5865f2"/><circle cx="25.500" cy="22" r="2.800" fill="#5865f2"/></symbol>
  <symbol id="t29" viewBox="0 0 42 42"><rect width="42" height="42" rx="9" fill="#0c77e0"/><path d="M7 18C8 6 24 2 33 10l5 6-8 1c0 8 2 13-4 19-12 2-19-6-19-18z" fill="#e8f5fd"/><path d="M24 14c-5 4-6 12-2 22 7-6 7-12 6-20z" fill="#6bbcf3"/></symbol>
  <symbol id="t30" viewBox="0 0 42 42"><circle cx="21" cy="21" r="21" fill="#3fa1f6"/><path d="M17 28c0-4-6-6-6-12a10 10 0 0 1 20 0c0 6-6 8-6 12z" fill="#fff"/><path d="M18 32h6" stroke="#fff" stroke-width="3"/></symbol>
  <symbol id="term" viewBox="0 0 42 42"><rect y="5" width="42" height="33" rx="2" fill="#333"/><path d="M0 5h42v5H0z" fill="#999"/><path d="M6 17l8 7-8 7M21 30h14" fill="none" stroke="#eee" stroke-width="3.500"/></symbol>
  <symbol id="ghd" viewBox="0 0 42 42"><circle cx="21" cy="21" r="20" fill="#6b2d91"/><g color="#fff"><use href="#gh" x="6" y="6" width="30" height="30"/></g></symbol>
  <symbol id="t33" viewBox="0 0 42 42"><path d="M2 5l26-2v26l-2 11L2 30z" fill="#3d86ec"/><path d="M22 10l12 2v22l-8 5V17l-4-3z" fill="#f7b500"/></symbol>
  <symbol id="t34" viewBox="0 0 42 42"><rect width="42" height="42" rx="9" fill="#121212"/><path d="M10 12h20L12 31h21" fill="none" stroke="#fff" stroke-width="6.500"/></symbol>
  <symbol id="note" viewBox="0 0 42 42"><rect x="4" y="3" width="32" height="38" fill="#86cdf1"/><path d="M8 0v5M16 0v5M24 0v5M32 0v5" stroke="#17486b" stroke-width="3"/><path d="M9 11h22M9 16h16" stroke="#0f6ca8" stroke-width="3"/><path d="M9 24v9M15 24v9M9 29h6M20 24h8M20 33h8M38 6L24 30" stroke="#b98a29" stroke-width="2.500"/></symbol>
  <symbol id="rdp" viewBox="0 0 42 42"><rect x="9" y="5" width="31" height="24" rx="2" fill="#eee" stroke="#8a8a8a" stroke-width="3"/><rect x="2" y="13" width="32" height="25" rx="2" fill="#fff" stroke="#8a8a8a" stroke-width="3"/><use href="#chrome" x="9" y="21" width="18" height="18"/></symbol>
  <symbol id="obss" viewBox="0 0 42 42"><circle cx="21" cy="21" r="18" fill="#1b1b1b"/><path d="M21 21c-4-6-3-10 1-14M21 21c7 0 11 3 12 8M21 21c-2 7-6 9-12 8" fill="none" stroke="#ddd" stroke-width="3"/></symbol>
  <symbol id="dock" viewBox="0 0 42 42"><circle cx="21" cy="21" r="21" fill="#1d8fe8"/><path d="M6 22h25c1-3 2-4 4-5l2 4c-2 0-3 1-4 2-2 7-7 10-14 10S7 29 6 22zM10 17h4v4h-4zM15 17h4v4h-4zM20 17h4v4h-4zM15 12h4v4h-4zM20 12h4v4h-4zM20 7h4v4h-4z" fill="#fff"/></symbol>
  <symbol id="cursor" viewBox="0 0 42 42"><rect x="4" y="4" width="34" height="34" rx="7" fill="#000"/><path d="M21 9l10 6v12l-10 6-10-6V15z" fill="#888"/><path d="M31 15L21 33V21l-10-6z" fill="#ddd"/></symbol>
  <symbol id="more" viewBox="0 0 42 42"><g fill="#222"><circle cx="10" cy="21" r="2.800"/><circle cx="21" cy="21" r="2.800"/><circle cx="32" cy="21" r="2.800"/></g></symbol>
  <symbol id="trayup" viewBox="0 0 24 24"><path d="M3 16l9-8 9 8" fill="none" stroke="#222" stroke-width="2.400"/></symbol>
  <symbol id="ime1" viewBox="0 0 28 28"><rect x="2" y="2" width="24" height="24" fill="#fff" stroke="#555" stroke-width="2"/><path d="M7 8h14v9H7zM7 12h14M14 5v19M10 17v6M18 17v6" fill="none" stroke="#444" stroke-width="2"/></symbol>
  <symbol id="ime2" viewBox="0 0 28 28"><rect width="28" height="28" rx="5" fill="#000"/><path d="M5 22h18M14 6v16M8 6v8h12V6M8 14v8M20 14v8" fill="none" stroke="#fff" stroke-width="2.200"/></symbol>
  <symbol id="net" viewBox="0 0 28 28"><path d="M20 4H2v16h20v-8M11 20v6M6 26h12" fill="none" stroke="#222" stroke-width="2"/><rect x="21" y="1" width="6" height="9" rx="1" fill="none" stroke="#222" stroke-width="2"/><path d="M24 10v16" stroke="#222" stroke-width="2"/></symbol>
  <symbol id="vol" viewBox="0 0 28 28"><path d="M2 10v8h5l6 6V4L7 10z" fill="none" stroke="#222" stroke-width="2"/><path d="M17 9c3 3 3 7 0 10" fill="none" stroke="#222" stroke-width="2"/><path d="M21 5c5 5 5 13 0 18" fill="none" stroke="#bbb" stroke-width="2"/></symbol>
  <symbol id="bat" viewBox="0 0 28 28"><rect x="2" y="8" width="22" height="14" rx="3" fill="none" stroke="#222" stroke-width="2"/><rect x="9" y="11" width="12" height="8" fill="#222"/><path d="M26 12v6" stroke="#222" stroke-width="3"/><path d="M8 0L2 10h4l-2 8 7-11H7z" fill="#222"/></symbol>
  <symbol id="tbell" viewBox="0 0 28 28"><path d="M3 20c3-3 2-8 3-12 1-10 15-10 16 0 1 4 0 9 3 12z" fill="#0d3350"/><path d="M10 23h8c-1 4-7 4-8 0z" fill="#0d3350"/></symbol>
</svg>

<header class="browser">
  <div class="tabstrip">
    <button class="tabsearch" aria-label="搜索标签页"><svg class="i20"><use href="#down"/></svg></button>
    <div class="tabs">
      <div class="tab active"><svg class="i28"><use href="#picx"/></svg><span class="tt">上传图片</span><button aria-label="关闭"><svg class="i28"><use href="#close"/></svg></button></div>
      <div class="tab"><svg class="i28"><use href="#g"/></svg><span class="tt">picx</span><button aria-label="关闭"><svg class="i28"><use href="#close"/></svg></button></div>
      <div class="tab"><svg class="i28"><use href="#g"/></svg><span class="tt">sharex</span><button aria-label="关闭"><svg class="i28"><use href="#close"/></svg></button></div>
      <div class="tab"><svg class="i28"><use href="#yt"/></svg><span class="tt">sharex</span><button aria-label="关闭"><svg class="i28"><use href="#close"/></svg></button></div>
      <div class="tab"><svg class="i28"><use href="#g"/></svg><span class="tt">sharex</span><button aria-label="关闭"><svg class="i28"><use href="#close"/></svg></button></div>
      <div class="tab"><svg class="i28"><use href="#photos"/></svg><span class="tt">图床</span><button aria-label="关闭"><svg class="i28"><use href="#close"/></svg></button></div>
      <div class="tab"><svg class="i28 dark"><use href="#gh"/></svg><span class="tt">obsidian</span><button aria-label="关闭"><svg class="i28"><use href="#close"/></svg></button></div>
      <div class="tab"><svg class="i28"><use href="#cf"/></svg><span class="tt">Worker</span><button aria-label="关闭"><svg class="i28"><use href="#close"/></svg></button></div>
      <div class="tab"><svg class="i28"><use href="#cm"/></svg><span class="tt">w(ﾟДﾟ)w</span><button aria-label="关闭"><svg class="i28"><use href="#close"/></svg></button></div>
      <div class="tab"><svg class="i28"><use href="#g"/></svg><span class="tt">cloud</span><button aria-label="关闭"><svg class="i28"><use href="#close"/></svg></button></div>
      <div class="tab"><svg class="i28"><use href="#cm"/></svg><span class="tt">w(ﾟДﾟ)w</span><button aria-label="关闭"><svg class="i28"><use href="#close"/></svg></button></div>
      <div class="tab"><svg class="i28"><use href="#yf"/></svg><span class="tt">一分机场</span><button aria-label="关闭"><svg class="i28"><use href="#close"/></svg></button></div>
      <div class="tab"><svg class="i28"><use href="#amie"/></svg><span class="tt">Amie</span><button aria-label="关闭"><svg class="i28"><use href="#close"/></svg></button></div>
      <div class="tab"><svg class="i28"><use href="#hh"/></svg><span class="tt"><svg class="dropi"><use href="#drop"/></svg> 温度</span><button aria-label="关闭"><svg class="i28"><use href="#close"/></svg></button></div>
      <div class="tab"><svg class="i28"><use href="#g"/></svg><span class="tt">cloud</span><button aria-label="关闭"><svg class="i28"><use href="#close"/></svg></button></div>
      <div class="tab"><svg class="i28"><use href="#sx"/></svg><span class="tt">Cloud</span><button aria-label="关闭"><svg class="i28"><use href="#close"/></svg></button></div>
      <div class="tab"><svg class="i28 dark"><use href="#gh"/></svg><span class="tt">Cherry</span><button aria-label="关闭"><svg class="i28"><use href="#close"/></svg></button></div>
      <div class="tab"><svg class="i28"><use href="#gmail"/></svg><span class="tt">[Verify</span><button aria-label="关闭"><svg class="i28"><use href="#close"/></svg></button></div>
      <div class="tab"><svg class="i28"><use href="#g"/></svg><span class="tt">sharex</span><button aria-label="关闭"><svg class="i28"><use href="#close"/></svg></button></div>
      <div class="tab"><svg class="i28"><use href="#g"/></svg><span class="tt">将网页</span><button aria-label="关闭"><svg class="i28"><use href="#close"/></svg></button></div>
    </div>
    <button class="newtab" aria-label="新标签页"><svg class="i24"><use href="#plus"/></svg></button>
    <div class="winbtns">
      <button aria-label="最小化"><svg class="i22"><use href="#min"/></svg></button>
      <button aria-label="还原"><svg class="i22"><use href="#restore"/></svg></button>
      <button aria-label="关闭窗口"><svg class="i22"><use href="#wclose"/></svg></button>
    </div>
  </div>
  <div class="toolbar">
    <button class="tb muted" aria-label="后退"><svg class="i26"><use href="#back"/></svg></button>
    <button class="tb muted" aria-label="前进"><svg class="i26"><use href="#fwd"/></svg></button>
    <button class="tb" aria-label="刷新"><svg class="i26"><use href="#reload"/></svg></button>
    <button class="tb" aria-label="主页"><svg class="i26"><use href="#home"/></svg></button>
    <div class="omnibox">
      <button class="site" aria-label="网站信息"><svg class="i26"><use href="#tune"/></svg></button>
      <input type="text" aria-label="地址" value="picx.xpoet.cn/#/upload">
      <button class="ob" aria-label="安装"><svg class="i28"><use href="#install"/></svg></button>
      <button class="ob blue" aria-label="收藏"><svg class="i28"><use href="#starf"/></svg></button>
    </div>
    <div class="exts">
      <button class="tb"><svg class="i28"><use href="#e1"/></svg></button>
      <button class="tb"><svg class="i28"><use href="#e2"/></svg></button>
      <button class="tb"><svg class="i28"><use href="#e3"/></svg></button>
      <button class="tb"><svg class="i28"><use href="#e4"/></svg></button>
      <button class="tb"><svg class="i28"><use href="#e5"/></svg><span class="bdg indigo">43</span></button>
      <button class="tb"><svg class="i28"><use href="#cloudo"/></svg></button>
      <button class="tb"><svg class="i28"><use href="#bw"/></svg></button>
      <button class="tb"><svg class="i28"><use href="#e8"/></svg><span class="bdg light">90</span></button>
      <button class="tb"><svg class="i28"><use href="#e9"/></svg></button>
      <button class="tb"><svg class="i28"><use href="#e10"/></svg></button>
      <button class="tb"><svg class="i28"><use href="#e11"/></svg></button>
      <button class="tb"><svg class="i28"><use href="#e12"/></svg></button>
      <button class="tb"><svg class="i28"><use href="#e13"/></svg></button>
      <button class="tb"><svg class="i28"><use href="#e14"/></svg></button>
      <button class="tb"><svg class="i28"><use href="#ub"/></svg><span class="bdg gray">2</span></button>
      <button class="tb"><svg class="i28"><use href="#e16"/></svg></button>
      <button class="tb"><svg class="i28"><use href="#e17"/></svg></button>
      <button class="tb"><svg class="i28"><use href="#e18"/></svg></button>
      <button class="tb"><svg class="i28"><use href="#logseq"/></svg></button>
      <button class="tb"><svg class="i28"><use href="#e20"/></svg></button>
      <button class="tb"><svg class="i28"><use href="#e21"/></svg></button>
      <button class="tb"><svg class="i28"><use href="#e22"/></svg></button>
      <button class="tb" aria-label="扩展程序"><svg class="i28"><use href="#puzzle"/></svg></button>
      <span class="vsep"></span>
      <button class="tb" aria-label="智能镜头"><svg class="i28"><use href="#lens"/></svg></button>
      <span class="vsep"></span>
      <button class="tb" aria-label="个人资料"><svg class="i30"><use href="#plant"/></svg></button>
      <button class="tb" aria-label="菜单"><svg class="i26"><use href="#dots"/></svg></button>
    </div>
  </div>
  <nav class="bookmarks">
    <div class="bms">
      <a href="#"><svg class="i28"><use href="#yf"/></svg>一分机场</a>
      <a href="#"><svg class="i28"><use href="#cm"/></svg>一分机场：便宜大...</a>
      <a href="#"><svg class="i28"><use href="#cm"/></svg>CMLiussss Blog -...</a>
      <a href="#"><svg class="i28"><use href="#cm"/></svg>telegraph-Image...</a>
      <a href="#"><svg class="i28"><use href="#yt"/></svg>搭建你的专属开源...</a>
      <a href="#"><svg class="i28"><use href="#sx"/></svg>Cloud flare R2 gui...</a>
      <a href="#"><svg class="i28 dark"><use href="#gh"/></svg>Cherry/ShareX-R2...</a>
      <a href="#"><svg class="i28"><use href="#flame"/></svg>B2 Cloud Storage...</a>
      <a href="#"><svg class="i28"><use href="#flame"/></svg>B2 Cloud Storage:...</a>
      <a href="#"><svg class="i28"><use href="#g"/></svg>sharex 配置 cloudf...</a>
      <a href="#"><svg class="i28"><use href="#ff"/></svg>使用AI写了2个小工...</a>
      <a href="#"><svg class="i28"><use href="#ff"/></svg>小沨的天空 - 知名...</a>
      <a href="#"><svg class="i28"><use href="#cf"/></svg>About - ImgAi</a>
    </div>
    <div class="bmtail">
      <button aria-label="更多书签"><svg class="i22"><use href="#raquo"/></svg></button>
      <span class="vsep"></span>
      <a href="#"><svg class="i30"><use href="#folder"/></svg>所有书签</a>
    </div>
  </nav>
</header>

<div class="work">
  <div class="picx">
    <div class="phead">
      <a class="logo" href="#"><svg class="i70"><use href="#picx"/></svg>PicX</a>
      <div class="puser">
        <button aria-label="通知"><svg class="i36"><use href="#bell"/></svg></button>
        <button aria-label="偏好"><svg class="i32"><use href="#sliders"/></svg></button>
        <button class="avatar" aria-label="用户"><span class="hong">紅</span><span class="red">Red</span></button>
        <button aria-label="展开"><svg class="caretb"><use href="#caret"/></svg></button>
      </div>
    </div>
    <div class="pbody">
      <aside class="side">
        <nav>
          <a href="#/config"><svg class="i38"><use href="#edit"/></svg>图床配置</a>
          <a href="#/upload" class="on"><svg class="i38"><use href="#upl"/></svg>上传图片</a>
          <a href="#/management"><svg class="i38"><use href="#pic"/></svg>图床管理</a>
          <a href="#/settings"><svg class="i38 big"><use href="#gear"/></svg>图床设置</a>
          <a href="#/toolbox"><svg class="i38"><use href="#box"/></svg>工具箱</a>
          <a href="#/feedback"><svg class="i38"><use href="#chat"/></svg>帮助反馈</a>
        </nav>
        <button class="fold" aria-label="收起"><svg class="i28"><use href="#laquo"/></svg></button>
      </aside>
      <main class="panel">
        <div class="content">
          <button class="dropzone"><svg class="cloud"><use href="#cloudup"/></svg><span>拖拽 / 粘贴 / 点击此处选择图片</span></button>
          <div class="dir"><svg class="i28"><use href="#folder"/></svg><span>目录</span><button class="path">/</button></div>
          <div class="status"><i class="dot"></i><span>2024-08-07 19:48:42</span><span>GitHub Pages</span><span>部署成功</span><a href="#">一键部署</a></div>
        </div>
      </main>
    </div>
    <div class="float">
      <button aria-label="拖动"><svg class="i34"><use href="#w1"/></svg></button>
      <button aria-label="收藏"><svg class="i34"><use href="#w2"/></svg></button>
      <button aria-label="标签"><svg class="i34"><use href="#w3"/></svg></button>
      <button aria-label="评论"><svg class="i34"><use href="#w4"/></svg></button>
      <button aria-label="首页"><svg class="i34"><use href="#w5"/></svg></button>
      <button aria-label="更多"><svg class="i34"><use href="#w6"/></svg></button>
    </div>
  </div>

  <aside class="dev">
    <div class="drow dtabs">
      <button class="ib"><svg class="i26"><use href="#inspect"/></svg></button>
      <button class="ib"><svg class="i28"><use href="#device"/></svg></button>
      <span class="ds"></span>
      <button class="dt">Elements</button><button class="dt">Console</button><button class="dt">Sources</button><button class="dt on">Network</button>
      <button class="chev"><svg class="i28"><use href="#raquo"/></svg></button>
      <span class="push cnt"><svg class="i20"><use href="#err"/></svg>2</span>
      <span class="cnt"><svg class="i20"><use href="#iss"/></svg>1</span>
      <span class="ds"></span>
      <button class="ib"><svg class="i28"><use href="#gear2"/></svg></button>
      <button class="ib"><svg class="i22"><use href="#dots"/></svg></button>
      <button class="ib"><svg class="i22"><use href="#wclose"/></svg></button>
    </div>
    <div class="drow">
      <button class="ib"><svg class="i26"><use href="#rec"/></svg></button>
      <button class="ib"><svg class="i26"><use href="#clear"/></svg></button>
      <span class="ds"></span>
      <button class="ib blue2"><svg class="i22"><use href="#funnelf"/></svg></button>
      <button class="ib"><svg class="i24"><use href="#search"/></svg></button>
      <span class="ds"></span>
      <label class="ck"><input type="checkbox">Preserve log</label>
      <span class="ds"></span>
      <label class="ck">
        <input type="checkbox">Disable cache</label>
      <select class="thr" aria-label="Throttling"><option>No throttling</option></select>
      <svg class="tri"><use href="#caret"/></svg>
      <button class="ib push"><svg class="i28"><use href="#wifi"/></svg></button>
      <span class="ds"></span><span class="ds wide"></span>
      <button class="ib"><svg class="i28"><use href="#gear2"/></svg></button>
      <span class="monitor"><i></i></span>
    </div>
    <div class="drow line">
      <button class="ib"><svg class="i22"><use href="#up"/></svg></button>
      <button class="ib"><svg class="i22"><use href="#dl"/></svg></button>
    </div>
    <div class="drow r4">
      <label class="filter"><svg class="i20"><use href="#funnel"/></svg><input type="text" placeholder="Filter"></label>
      <label class="ck"><input type="checkbox">Invert</label>
      <span class="ds"></span>
      <label class="ck"><input type="checkbox">Hide data URLs</label>
      <label class="ck"><input type="checkbox">Hide extension URLs</label>
    </div>
    <div class="drow pills">
      <button class="on">All</button><span class="ps"></span><button>Fetch/XHR</button><button>Doc</button><button>CSS</button><button>JS</button><button>Font</button><button>Img</button><button>Media</button><button>Manifest</button><button>WS</button><button>Wasm</button><button>Other</button>
    </div>
    <div class="drow r6">
      <label class="ck"><input type="checkbox">Blocked response cookies</label>
      <label class="ck"><input type="checkbox">Blocked requests</label>
      <label class="ck"><input type="checkbox">3rd-party requests</label>
    </div>
    <div class="timeline">
      <span>50 ms</span><span>100 ms</span><span>150 ms</span><span>200 ms</span><span>250 ms</span><span>300 ms</span><span></span>
      <div class="bar"><i class="q"></i><i class="gr"></i><i class="bl"></i></div>
      <b class="hl"></b><b class="hr"></b>
    </div>
    <div class="net">
      <table>
        <colgroup><col class="c1"><col class="c2"><col class="c2"><col class="c3"><col class="c2"><col class="c2"></colgroup>
        <thead><tr><th>Name</th><th>Status</th><th>Type</th><th>Initiator</th><th>Size</th><th>Time</th></tr></thead>
        <tbody>
          <tr class="req"><td><svg class="i24"><use href="#json"/></svg>web_version_by_plugin.json?...</td><td>200</td><td>fetch</td><td><a href="#">webUpdateNotice.js</a></td><td class="r">150 B</td><td class="r">300 ms</td></tr>
          <tr class="fill"><td></td><td></td><td></td><td></td><td></td><td></td></tr>
        </tbody>
      </table>
    </div>
    <div class="drow sum"><span>1 requests</span><span>150 B transferred</span><span>26 B resources</span></div>
    <div class="drow dtabs drawer">
      <button class="ib"><svg class="i22"><use href="#dots"/></svg></button>
      <button class="dt on">Console</button>
      <button class="ib push"><svg class="i22"><use href="#wclose"/></svg></button>
    </div>
    <div class="drow">
      <button class="ib"><svg class="i26"><use href="#side"/></svg></button>
      <button class="ib"><svg class="i26"><use href="#clear"/></svg></button>
      <span class="ds"></span>
      <button class="dd">top <svg class="tri"><use href="#caret"/></svg></button>
      <span class="ds"></span>
      <button class="ib"><svg class="eye"><use href="#eye"/></svg></button>
      <span class="ds"></span>
      <label class="filter sm"><svg class="i20"><use href="#funnel"/></svg><input type="text" placeholder="Filter"></label>
      <button class="dd">Default levels <svg class="tri"><use href="#caret"/></svg></button>
      <span class="ds"></span>
      <span class="issues">4 Issues: <svg class="i20"><use href="#iss"/></svg>1 <svg class="i20"><use href="#msg"/></svg>3</span>
      <span class="ds push"></span>
    </div>
    <div class="drow line r43">
      <button class="ib"><svg class="i28"><use href="#gear2"/></svg></button>
    </div>
    <div class="console">
      <div class="log">
        <div class="m"><span>RSS Subscription extension: Checking if document is feed</span><a href="#">sniff_common.js:51</a></div>
        <div class="m"><span>RSS Subscription extension: Exiting: feed is not a feed document</span><a href="#">sniff_common.js:51</a></div>
        <div class="m"><span>RSS Subscription extension: Document is not a feed, check for &lt;link&gt; tags.</span><a href="#">sniff_common.js:51</a></div>
        <div class="m error"><svg class="i20"><use href="#err"/></svg><span>Failed to load resource: net::ERR_BLOCKED_BY_CLIENT</span><a href="#">ipapi.co/193.123.242.61/country/:1</a><svg class="i24"><use href="#swap"/></svg></div>
        <div class="prompt"><svg viewBox="0 0 8 14"><path d="M1 1l5 6-5 6" fill="none" stroke="#1a66e0" stroke-width="2"/></svg></div>
      </div>
      <div class="sb"><svg class="tri up"><use href="#caret"/></svg><i></i><svg class="tri dim"><use href="#caret"/></svg></div>
    </div>
  </aside>
</div>

<footer class="taskbar">
  <div class="apps">
    <button><svg class="i42"><use href="#win"/></svg></button>
    <button><svg class="i38"><use href="#find"/></svg></button>
    <button><svg class="i42"><use href="#task"/></svg></button>
    <button><svg class="i42"><use href="#setg"/></svg></button>
    <button class="cur run"><svg class="chp"><use href="#chromep"/></svg></button>
    <button class="alert run"><svg class="i42"><use href="#wechat"/></svg></button>
    <button><svg class="i38"><use href="#logseq"/></svg></button>
    <button class="run"><svg class="i42"><use href="#files"/></svg></button>
    <button><svg class="i42"><use href="#vsc"/></svg></button>
    <button><svg class="i42"><use href="#t10"/></svg></button>
    <button><svg class="i42"><use href="#t11"/></svg></button>
    <button><svg class="i38"><use href="#notion"/></svg></button>
    <button><svg class="i42"><use href="#t13"/></svg></button>
    <button class="run"><svg class="i38"><use href="#obs"/></svg></button>
    <button><svg class="i42"><use href="#t15"/></svg></button>
    <button><svg class="i42"><use href="#store"/></svg></button>
    <button><svg class="i42"><use href="#t17"/></svg></button>
    <button><svg class="i42"><use href="#tg"/></svg></button>
    <button><svg class="i42"><use href="#tt"/></svg></button>
    <button><svg class="i34"><use href="#bw"/></svg></button>
    <button><svg class="i42"><use href="#t21"/></svg></button>
    <button><svg class="i42"><use href="#t22"/></svg></button>
    <button class="run"><svg class="i42"><use href="#t23"/></svg></button>
    <button><svg class="i42"><use href="#t24"/></svg></button>
    <button class="run"><svg class="i42"><use href="#t25"/></svg></button>
    <button><svg class="i42"><use href="#t26"/></svg></button>
    <button><svg class="i42"><use href="#t27"/></svg></button>
    <button><svg class="i42"><use href="#dc"/></svg></button>
    <button><svg class="i42"><use href="#t29"/></svg></button>
    <button><svg class="i42"><use href="#t30"/></svg></button>
    <button><svg class="i42"><use href="#term"/></svg></button>
    <button><svg class="i42"><use href="#ghd"/></svg></button>
    <button><svg class="i42"><use href="#t33"/></svg></button>
    <button><svg class="i42"><use href="#t34"/></svg></button>
    <button class="run"><svg class="i42"><use href="#note"/></svg></button>
    <button><svg class="i42"><use href="#rdp"/></svg></button>
    <button><svg class="i42"><use href="#obss"/></svg></button>
    <button class="run"><svg class="i42"><use href="#dock"/></svg></button>
    <button class="run"><svg class="chp"><use href="#chromep"/></svg></button>
    <button class="run"><svg class="i42"><use href="#cursor"/></svg></button>
  </div>
  <div class="apps second">
    <button class="run"><svg class="i42"><use href="#sx"/></svg></button>
    <button><svg class="i42"><use href="#more"/></svg></button>
  </div>
  <div class="tray">
    <button class="t1"><svg class="i22"><use href="#trayup"/></svg></button>
    <button class="t2"><svg class="i28"><use href="#ime1"/></svg></button>
    <button class="t2"><svg class="i28"><use href="#ime2"/></svg></button>
    <button class="sys"><svg class="i28"><use href="#net"/></svg><svg class="i28"><use href="#vol"/></svg><svg class="i28"><use href="#bat"/></svg></button>
    <button class="clock"><span>19:40</span><span>2024/09/05</span></button>
    <button class="tbell"><svg class="i28"><use href="#tbell"/></svg></button>
  </div>
</footer>
</body>
</html>
```
FILE: styles.css
```css
* { box-sizing: border-box; }
body {
  margin: 0;
  min-height: 100vh;
  display: flex;
  flex-direction: column;
  font: 20px/28px "Open Sans", "Noto Sans CJK SC", sans-serif;
  color: #3c3c3e;
  background: #fff;
}
button, input, select { font: inherit; color: inherit; border: 0; background: none; padding: 0; margin: 0; outline: 0; }
button { display: flex; align-items: center; justify-content: center; flex: none; }
a { color: inherit; text-decoration: none; }
svg { display: block; flex: none; }
.sprite { position: absolute; width: 0; height: 0; }
.i20 { width: 20px; height: 20px; }
.i22 { width: 22px; height: 22px; }
.i24 { width: 24px; height: 24px; }
.i26 { width: 26px; height: 26px; }
.i28 { width: 28px; height: 28px; }
.i30 { width: 30px; height: 30px; }
.i32 { width: 32px; height: 32px; }
.i34 { width: 34px; height: 34px; }
.i36 { width: 36px; height: 36px; }
.i38 { width: 38px; height: 38px; }
.i42 { width: 42px; height: 42px; }
.i70 { width: 70px; height: 70px; }
.dark { color: #1f2328; }

/* Browser chrome */
.tabstrip { display: flex; height: 70px; background: #e2e2e2; }
.tabsearch { width: 46px; height: 50px; margin: 10px 8px 0 12px; border-radius: 16px; background: #efefef; color: #111; }
.tabs { flex: 1; min-width: 0; display: grid; grid-template-columns: repeat(20, minmax(0, 1fr)); }
.tab {
  display: flex; align-items: center; gap: 14px; height: 50px; margin-top: 10px; padding: 0 20px 0 18px;
  background: linear-gradient(#c2c2c2, #c2c2c2) right center / 2px 28px no-repeat;
}
.tab.active { position: relative; height: 60px; margin: 10px 5px 0 4px; padding: 0 15px 10px 14px; background: #fff; border-radius: 16px 16px 0 0; }
.tab.active::before, .tab.active::after { content: ""; position: absolute; bottom: 0; width: 14px; height: 14px; }
.tab.active::before { left: -14px; background: radial-gradient(circle at 0 0, transparent 14px, #fff 15px); }
.tab.active::after { right: -14px; background: radial-gradient(circle at 100% 0, transparent 14px, #fff 15px); }
.tab .tt { flex: 1; min-width: 0; overflow: hidden; white-space: nowrap; -webkit-mask-image: linear-gradient(90deg, #000 65%, transparent); mask-image: linear-gradient(90deg, #000 65%, transparent); }
.dropi { display: inline-block; width: 16px; height: 24px; vertical-align: middle; }
.newtab { width: 54px; }
.winbtns { display: flex; margin-left: 90px; color: #111; }
.winbtns button { width: 80px; }
.toolbar { display: flex; align-items: center; height: 80px; padding: 0 6px 0 7px; }
.tb { position: relative; width: 63px; height: 58px; color: #3f4245; }
.muted { color: #a3a3a3; }
.omnibox { flex: 1; min-width: 0; display: flex; align-items: center; height: 58px; margin: 0 16px; padding: 0 13px 0 7px; border-radius: 29px; background: #eeecee; }
.site { width: 42px; height: 42px; border-radius: 50%; background: #fff; color: #222; }
.omnibox input { flex: 1; min-width: 0; padding-left: 14px; font-size: 24px; color: #2b2b2d; }
.ob { width: 56px; height: 42px; }
.blue { color: #0b57d0; }
.exts { display: flex; align-items: center; }
.bdg { position: absolute; left: 26px; top: 29px; min-width: 24px; padding: 0 4px; border-radius: 6px; font: 600 19px/24px "Open Sans", sans-serif; color: #fff; }
.indigo { background: #3c4db0; }
.light { background: #b4b4b4; color: #222; }
.gray { background: #606063; left: 30px; }
.vsep { width: 2px; height: 28px; margin: 0 16px; background: #dadada; }
.bookmarks { display: flex; align-items: center; height: 60px; padding: 0 22px 6px 21px; border-bottom: 2px solid #e9eaec; }
.bms { flex: 1; min-width: 0; display: grid; grid-template-columns: 151px repeat(12, minmax(0, 1fr)); }
.bookmarks a { display: flex; align-items: center; gap: 11px; white-space: nowrap; }
.bmtail { display: flex; align-items: center; justify-content: flex-end; width: 412px; }
.bmtail .vsep { margin: 0 26px 0 30px; }

/* Work area */
.work { flex: 1; min-height: 0; display: grid; grid-template-columns: 359fr 121fr; }
.picx { position: relative; min-width: 0; display: flex; flex-direction: column; background: #f6f8fc; border-right: 2px solid #e3e5ea; font-family: "Liberation Sans", "Noto Sans CJK SC", sans-serif; color: #4c4d52; }
.phead { display: flex; justify-content: space-between; align-items: center; height: 124px; padding: 0 38px 16px 35px; }
.logo { display: flex; align-items: center; gap: 20px; font-size: 51px; line-height: 60px; font-weight: 700; }
.puser { display: flex; align-items: center; }
.puser button { width: 70px; }
.puser button:last-child { width: 58px; }
.puser .avatar { width: 66px; height: 66px; margin: 0 11px; flex-direction: column; align-items: flex-end; justify-content: flex-end; padding: 0 12px 7px 0; border: 2px solid #44454a; border-radius: 50%; background: #e0193b; box-shadow: inset 0 0 0 2px #fff; color: #fff; }
.puser button:last-child { width: 38px; }
.hong { font: 14px/14px "Noto Sans CJK TC", sans-serif; }
.red { font: 700 8px/9px "Liberation Serif", serif; }
.caretb { width: 24px; height: 14px; }
.pbody { flex: 1; display: flex; min-height: 0; }
.side { width: 420px; flex: none; display: flex; flex-direction: column; justify-content: space-between; padding: 35px 35px 29px 0; }
.side nav { display: flex; flex-direction: column; gap: 7px; }
.side nav a { display: flex; align-items: center; gap: 21px; height: 86px; padding-left: 38px; border-radius: 0 20px 20px 0; font-size: 24px; }
.side nav a.on { background: #ebeefe; color: #4a6fc4; font-weight: 700; }
.fold { width: 28px; height: 40px; margin-left: 37px; }
.panel { flex: 1; min-width: 0; margin-right: 28px; padding: 53px 40px 0; background: #fff; border-radius: 14px 14px 0 0; }
.content { max-width: 1540px; margin: 0 auto; display: flex; flex-direction: column; }
.dropzone { flex-direction: column; height: 525px; border: 7px dashed #83838b; border-radius: 14px; color: #aaa; font-size: 35px; line-height: 52px; }
.cloud { width: 175px; height: 175px; margin-bottom: 5px; }
.dir { display: flex; align-items: center; height: 56px; margin: 28px 0 46px; font-size: 24px; }
.dir span { margin: 0 10px 0 9px; }
.path { width: 47px; height: 56px; border: 1px solid #dde3fb; border-radius: 7px; background: #ebeefe; color: #4a6fc4; font-size: 20px; }
.status { display: flex; align-items: center; gap: 18px; height: 72px; padding: 0 33px 0 21px; border: 2px solid #c9cacd; border-radius: 8px; background: #f4f4f5; color: #909399; font-size: 23px; }
.dot { width: 18px; height: 18px; margin-right: -2px; border-radius: 50%; background: #5fc13a; }
.status a { margin-left: auto; font-size: 24px; font-weight: 500; color: #a4baf0; }
.float { position: absolute; right: 12px; top: 222px; width: 70px; height: 378px; padding-top: 5px; display: flex; flex-direction: column; align-items: center; border-radius: 12px; background: rgba(255, 255, 255, .6); color: #d0d1d6; }
.float button { height: 63px; }
.float button:first-child { height: 42px; }

/* DevTools */
.dev { min-width: 0; display: flex; flex-direction: column; background: #fff; color: #3c3c3e; white-space: nowrap; }
.drow { position: relative; display: flex; align-items: center; height: 46px; padding-left: 4px; flex: none; }
.drow.line { border-bottom: 1px solid #d8dbe0; }
.drow.r43 { height: 44px; }
.dtabs { height: 48px; background: #ececec; border-bottom: 1px solid #d3d6db; }
.ib { width: 48px; height: 40px; }
.blue2 { color: #1a73e8; }
.ds { width: 2px; height: 28px; margin: 0 8px; background: #d5e1f3; flex: none; }
.ds.wide { margin-left: 20px; }
.push { margin-left: auto; }
.dt { height: 48px; padding: 0 20px; border-bottom: 3px solid transparent; }
.dt.on { color: #1a56c4; border-bottom-color: #1a56c4; }
.dtabs .chev { width: 36px; }
.cnt { display: flex; align-items: center; gap: 8px; padding-right: 18px; }
.cnt + .ds { margin-left: 0; }
.ck { display: flex; align-items: center; gap: 12px; margin: 0 9px; }
.ck input { appearance: none; width: 20px; height: 20px; border: 2px solid #747678; border-radius: 4px; background: #fff; }
.thr { appearance: none; width: 150px; margin-left: 8px; }
.tri { display: inline-block; width: 14px; height: 12px; }
.monitor { position: absolute; right: 0; top: 5px; width: 25px; height: 74px; border-radius: 5px 0 0 5px; background: #3a3a3c; z-index: 1; padding: 8px 8px; }
.monitor i { display: block; height: 58px; background: repeating-linear-gradient(#5c5c5e 0 1px, #3a3a3c 1px 4px); border-left: 1px solid #4c4c4e; }
.filter { display: flex; align-items: center; gap: 12px; width: 332px; height: 34px; margin: 0 20px 0 5px; padding-left: 18px; border-radius: 17px; background: #ebebec; }
.filter input { flex: 1; min-width: 0; width: 0; }
.filter input::placeholder { color: #3c3c3e; opacity: 1; }
.filter.sm { width: 246px; margin: 0 6px 0 4px; }
.pills { height: 43px; padding-left: 8px; gap: 8px; }
.pills button { height: 36px; padding: 0 10px; border: 1px solid #c3c5c9; border-radius: 10px; font-size: 18px; color: #1f1f1f; }
.pills .on { border-color: #d3e3fd; background: #d3e3fd; color: #0b2a5e; padding: 0 9px; }
.ps { width: 2px; height: 28px; background: #dde2ea; margin-right: -2px; }
.r6 { height: 41px; }
.r6 .ck + .ck { margin-left: 18px; }
.timeline { position: relative; display: grid; grid-template-columns: repeat(6, 147fr) 86fr; height: 141px; border-top: 1px solid #d8dbe0; border-bottom: 1px solid #d0d2d6; flex: none; font-size: 17px; line-height: 36px; }
.timeline span { border-right: 2px solid #e2e2e4; padding-right: 4px; text-align: right; color: #303133; }
.timeline span:nth-child(7) { border: 0; }
.bar { position: absolute; left: 2px; right: 58px; top: 50px; height: 4px; display: flex; }
.bar .q { width: 15px; background: #dfdfdf; }
.bar .gr { flex: 1; background: #43b567; margin-right: 2px; }
.bar .bl { width: 16px; background: #5a8fe0; }
.hl, .hr { position: absolute; top: 0; width: 9px; height: 34px; background: linear-gradient(90deg, #1a56c4 3px, #d3e3fd 3px) 0 10px / 9px 13px no-repeat #d3e3fd; border-radius: 0 7px 7px 0; }
.hl { left: 0; }
.hr { right: 0; width: 6px; border-radius: 7px 0 0 7px; }
.timeline::before { content: ""; position: absolute; left: 0; top: 34px; bottom: 0; width: 3px; background: #a9c4ee; }
.timeline::after { content: ""; position: absolute; right: 0; top: 34px; bottom: 0; width: 2px; background: #a9c4ee; }
.net { flex: 1; min-height: 0; display: grid; }
table { width: 100%; height: 100%; table-layout: fixed; border-collapse: collapse; }
.c1 { width: 37%; }
.c2 { width: 11%; }
.c3 { width: 19%; }
th { height: 47px; font-weight: 400; text-align: left; background: #f5f5f6; border-bottom: 2px solid #dcdde0; color: #1f1f1f; }
th, td { padding: 0 8px; border-right: 2px solid #e4e4e6; overflow: hidden; }
th:last-child, td:last-child { border-right: 0; }
.req td { height: 39px; background: #f8f8f8; color: #1f1f1f; }
.req td svg { display: inline-block; vertical-align: middle; margin-right: 7px; }
.req a { text-decoration: underline; text-underline-offset: 3px; }
.req .r { text-align: right; padding-right: 6px; }
.sum { height: 47px; border-top: 2px solid #dcdde0; padding-left: 18px; }
.sum span + span { margin-left: 16px; padding-left: 15px; border-left: 2px solid #d5e1f3; }
.drawer { border-top: 1px solid #d3d6db; }
.dd { gap: 8px; padding: 0 10px; }
.eye { width: 32px; height: 22px; }
.issues { display: flex; align-items: center; gap: 9px; margin-left: 10px; }
.console { display: flex; height: 310px; flex: none; font: 18px/26px "Liberation Mono", monospace; white-space: normal; color: #2b2b2d; }
.log { flex: 1; min-width: 0; padding: 5px 8px 0 7px; }
.m { display: flex; justify-content: space-between; gap: 12px; margin: 0 43px 0 41px; padding: 8px 7px 4px 0; border-top: 2px solid #e6e7ea; }
.m a { flex: none; color: #8a8a8c; }
.m.error { margin: 0; padding: 4px 60px 2px 14px; gap: 8px; border: 0; border-radius: 8px; background: #f9e9e8; color: #2b1312; }
.m.error svg { margin-top: 2px; }
.m.error span { width: 300px; margin-right: auto; }
.m.error a { color: #1a56c4; text-decoration: underline; text-underline-offset: 4px; }
.prompt { padding: 16px 14px; }
.prompt svg { width: 9px; height: 18px; }
.sb { width: 26px; display: flex; flex-direction: column; align-items: center; padding: 11px 0 9px; background: #f1f1f2; color: #444; }
.sb i { width: 24px; height: 116px; margin-top: auto; margin-bottom: 6px; background: #bdbdbf; }
.sb .up { transform: rotate(180deg); }
.sb .dim { color: #8e8e90; }

/* Taskbar */
.taskbar {
  display: flex; align-items: center; height: 83px; border-top: 2px solid #a9abae;
  background: linear-gradient(90deg, #d5dceb 0, #d6dbe9 25%, #efefef 30%, #eeeeef 54%, #e6e8f0 58%, #eeeeee 61%, #d3efbf 64%, #d3efbf 68%, #eeeeee 71%, #efeff0 100%);
}
.apps { display: flex; margin-left: 17px; }
.apps button { position: relative; width: 77px; height: 81px; }
.apps.second { margin-left: 10px; }
.run::after { content: ""; position: absolute; bottom: 9px; left: 33px; width: 11px; height: 5px; border-radius: 3px; background: #86888c; }
.apps .cur { width: 67px; height: 67px; margin: 7px 5px; border-radius: 8px; background: #eef2f9; }
.cur.run::after { left: 20px; bottom: 0; width: 27px; background: #0b4a6f; }
.apps .alert { width: 69px; height: 70px; margin: 6px 4px; border-radius: 8px; background: #e8aaa7; }
.alert.run::after { left: 29px; bottom: 3px; background: #c42b1c; }
.chp { width: 56px; height: 52px; margin: 0 0 10px 6px; }
.tray { margin-left: auto; display: flex; align-items: center; color: #222; padding-right: 26px; }
.t1 { width: 44px; }
.t2 { width: 67px; }
.sys { gap: 14px; padding: 0 16px; }
.clock { flex-direction: column; align-items: flex-end; width: 136px; font-size: 20px; line-height: 28px; }
.tbell { width: 48px; }
```
